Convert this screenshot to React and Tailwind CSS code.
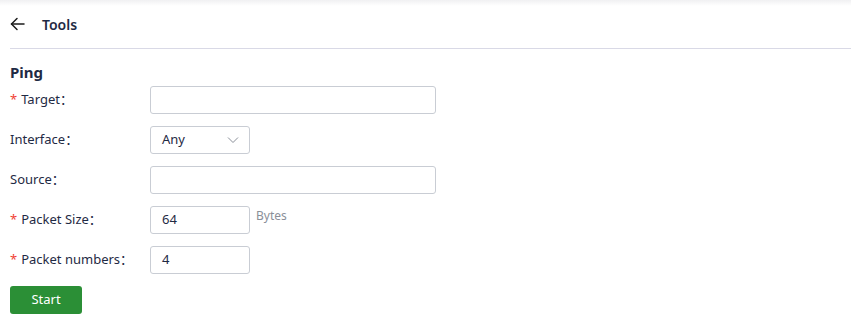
import React from 'react';

const Label = ({ required, children }) => (
  <div className="w-[140px] shrink-0 text-[13px] text-[#1f2a44]">
    {required && <span className="text-[#f04134] mr-1">*</span>}
    {children}
    <span>：</span>
  </div>
);

const Row = ({ label, required, children }) => (
  <div className="flex items-center h-[28px]">
    <Label required={required}>{label}</Label>
    {children}
  </div>
);

const Input = ({ value = '', width = 'w-[286px]' }) => (
  <div className={`${width} h-[28px] border border-[#c9cdd4] rounded-[3px] px-[11px] flex items-center text-[13px] text-[#1f2a44]`}>
    {value}
  </div>
);

export default function App() {
  return (
    <div className="w-[851px] h-[324px] bg-white overflow-hidden" style={{ fontFamily: '"Noto Sans", "Noto Sans CJK SC", sans-serif' }}>
      {/* header */}
      <div className="bg-gradient-to-b from-[#f0f0f2] via-white to-white via-[12%]">
        <div className="flex items-center h-[48px] pl-[10px] gap-[17px]">
          <svg width="15" height="14" viewBox="0 0 15 14" fill="none" stroke="#1b1b1b" strokeWidth="1.5" strokeLinecap="round" strokeLinejoin="round">
            <path d="M14 7H1.5" />
            <path d="M7 1.5L1.5 7L7 12.5" />
          </svg>
          <span className="text-[14px] font-semibold text-[#1f2a44]">Tools</span>
        </div>
        <div className="ml-[10px] h-px bg-[#d9d9e6]" />
      </div>

      {/* form */}
      <div className="px-[10px] pt-[14px]">
        <div className="text-[15px] font-bold text-[#1f2a44] leading-[18px]">Ping</div>
        <div className="flex flex-col gap-[12px] mt-[5px]">
          <Row label="Target" required>
            <Input />
          </Row>
          <Row label="Interface">
            <div className="w-[100px] h-[28px] border border-[#c9cdd4] rounded-[3px] pl-[11px] pr-[10px] flex items-center justify-between text-[13px] text-[#1f2a44]">
              <span>Any</span>
              <svg width="12" height="8" viewBox="0 0 12 8" fill="none" stroke="#8a8f99" strokeWidth="1">
                <path d="M1 1.5L6 6.5L11 1.5" />
              </svg>
            </div>
          </Row>
          <Row label="Source">
            <Input />
          </Row>
          <Row label="Packet Size" required>
            <Input value="64" width="w-[100px]" />
            <span className="ml-[6px] self-start mt-[1px] text-[12px] text-[#8a8f99]">Bytes</span>
          </Row>
          <Row label="Packet numbers" required>
            <Input value="4" width="w-[100px]" />
          </Row>
        </div>
        <button className="mt-[12px] w-[72px] h-[28px] rounded-[3px] bg-[#2b8f36] text-white text-[13px]">
          Start
        </button>
      </div>
    </div>
  );
}
